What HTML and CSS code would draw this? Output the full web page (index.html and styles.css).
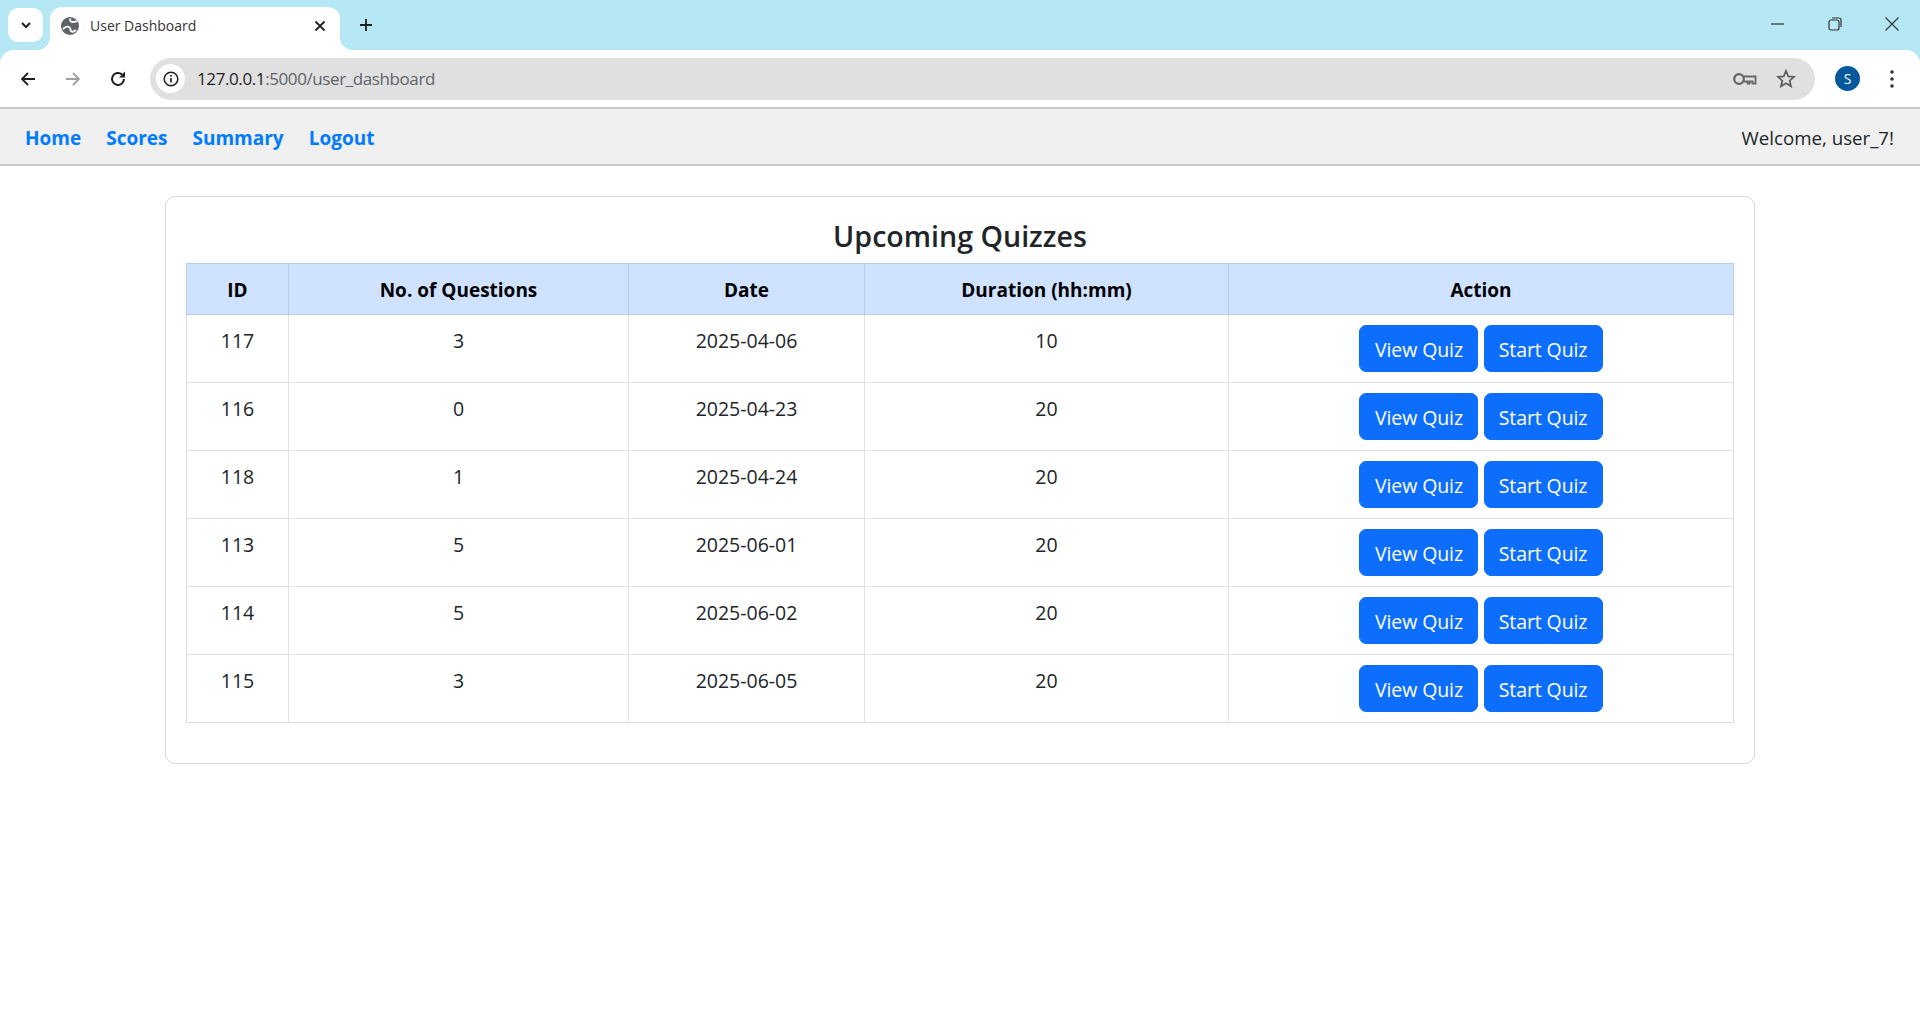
FILE: index.html
```html
<!DOCTYPE html>
<html lang="en">

<head>
    <title>User Dashboard</title>
    <link rel="stylesheet" href="styles.css">
</head>

<body>
    <!-- browser chrome -->
    <div class="tabstrip">
        <div class="tabsearch">
            <svg width="14" height="14" viewBox="0 0 14 14"><path d="M3 5l4 4 4-4" fill="none" stroke="#1f1f1f" stroke-width="2"/></svg>
        </div>
        <div class="tab">
            <svg class="favicon" width="18" height="18" viewBox="0 0 18 18">
                <circle cx="9" cy="9" r="9" fill="#5f6368"/>
                <path d="M9.500 1.500c-1 2 0 3.500 2 3.500s3-.5 4.500-.5M2 12c2-2 4-3 6-2s1 3 2 4 3 1 5-1" fill="none" stroke="#fff" stroke-width="1.800"/>
            </svg>
            <span class="tabtitle">User Dashboard</span>
            <svg class="tabclose" width="12" height="12" viewBox="0 0 12 12"><path d="M1.500 1.500l9 9M10.500 1.500l-9 9" stroke="#1f1f1f" stroke-width="1.800"/></svg>
        </div>
        <svg class="newtab" width="14" height="14" viewBox="0 0 14 14"><path d="M7 1v12M1 7h12" stroke="#1f1f1f" stroke-width="1.800"/></svg>
        <div class="winctrls">
            <svg width="14" height="14" viewBox="0 0 14 14"><path d="M0 7h13" stroke="#333" stroke-width="1.200"/></svg>
            <svg width="14" height="14" viewBox="0 0 14 14"><rect x="1" y="3" width="10" height="10" rx="2" fill="none" stroke="#333" stroke-width="1.200"/><path d="M4 1h7a2 2 0 0 1 2 2v7" fill="none" stroke="#333" stroke-width="1.200"/></svg>
            <svg width="14" height="14" viewBox="0 0 14 14"><path d="M.5.5l13 13M13.500.5l-13 13" stroke="#333" stroke-width="1.100"/></svg>
        </div>
    </div>
    <div class="toolbar">
        <svg class="navicon" width="18" height="18" viewBox="0 0 18 18"><path d="M16 9H3M9 3L3 9l6 6" fill="none" stroke="#1f1f1f" stroke-width="1.800"/></svg>
        <svg class="navicon" width="18" height="18" viewBox="0 0 18 18"><path d="M2 9h13M9 3l6 6-6 6" fill="none" stroke="#a0a0a0" stroke-width="1.800"/></svg>
        <svg class="navicon" width="18" height="18" viewBox="0 0 18 18"><path d="M15 9a6 6 0 1 1-2-4.500" fill="none" stroke="#1f1f1f" stroke-width="2"/><path d="M16 1.500v6h-6z" fill="#1f1f1f"/></svg>
        <div class="omnibox">
            <div class="siteinfo">
                <svg width="16" height="16" viewBox="0 0 16 16"><circle cx="8" cy="8" r="6.800" fill="none" stroke="#1f1f1f" stroke-width="1.500"/><path d="M8 7v4.500" stroke="#1f1f1f" stroke-width="1.700"/><circle cx="8" cy="4.800" r="1" fill="#1f1f1f"/></svg>
            </div>
            <span class="url"><span class="urlhost">127.0.0.1</span>:5000/user_dashboard</span>
            <svg class="omniicon" width="24" height="14" viewBox="0 0 24 14"><circle cx="6" cy="7" r="4.800" fill="none" stroke="#666" stroke-width="2.200"/><path d="M10.500 4.500h12v7h-3v-2h-3v2h-2v-2h-4" fill="none" stroke="#666" stroke-width="1.800"/></svg>
            <svg class="omniicon" width="20" height="19" viewBox="0 0 20 19"><path d="M10 2l2.300 5.400 5.700.5-4.300 3.800 1.300 5.600-5-3-5 3 1.300-5.600L2 7.900l5.700-.5z" fill="none" stroke="#5f5f5f" stroke-width="1.800"/></svg>
        </div>
        <div class="avatar">S</div>
        <svg class="menudots" width="4" height="18" viewBox="0 0 4 18"><circle cx="2" cy="2" r="1.800" fill="#333"/><circle cx="2" cy="9" r="1.800" fill="#333"/><circle cx="2" cy="16" r="1.800" fill="#333"/></svg>
    </div>

    <!-- page -->
    <nav class="navbar">
        <div class="navlinks">
            <a href="#">Home</a>
            <a href="#">Scores</a>
            <a href="#">Summary</a>
            <a href="#">Logout</a>
        </div>
        <span class="welcome">Welcome, user_7!</span>
    </nav>

    <div class="card">
        <h3>Upcoming Quizzes</h3>
        <table>
            <thead>
                <tr>
                    <th class="col-id">ID</th>
                    <th class="col-num">No. of Questions</th>
                    <th class="col-date">Date</th>
                    <th class="col-dur">Duration (hh:mm)</th>
                    <th>Action</th>
                </tr>
            </thead>
            <tbody>
                <tr><td>117</td><td>3</td><td>2025-04-06</td><td>10</td><td><a class="btn" href="#">View Quiz</a> <a class="btn" href="#">Start Quiz</a></td></tr>
                <tr><td>116</td><td>0</td><td>2025-04-23</td><td>20</td><td><a class="btn" href="#">View Quiz</a> <a class="btn" href="#">Start Quiz</a></td></tr>
                <tr><td>118</td><td>1</td><td>2025-04-24</td><td>20</td><td><a class="btn" href="#">View Quiz</a> <a class="btn" href="#">Start Quiz</a></td></tr>
                <tr><td>113</td><td>5</td><td>2025-06-01</td><td>20</td><td><a class="btn" href="#">View Quiz</a> <a class="btn" href="#">Start Quiz</a></td></tr>
                <tr><td>114</td><td>5</td><td>2025-06-02</td><td>20</td><td><a class="btn" href="#">View Quiz</a> <a class="btn" href="#">Start Quiz</a></td></tr>
                <tr><td>115</td><td>3</td><td>2025-06-05</td><td>20</td><td><a class="btn" href="#">View Quiz</a> <a class="btn" href="#">Start Quiz</a></td></tr>
            </tbody>
        </table>
    </div>
</body>

</html>
```

FILE: styles.css
```css
body {
  margin: 0;
  background-color: #fff;
  color: #212529;
  font-family: "Open Sans", "Noto Sans", sans-serif;
  font-size: 19.500px;
  line-height: 30px;
}

/* Browser tab strip */
.tabstrip {
  display: flex;
  align-items: flex-end;
  height: 50px;
  background-color: #b5e8f4;
}

.tabsearch {
  display: flex;
  align-items: center;
  justify-content: center;
  width: 35px;
  height: 34px;
  margin: 0 0 8px 8px;
  border-radius: 10px;
  background-color: #fff;
}

.tab {
  position: relative;
  display: flex;
  align-items: center;
  width: 290px;
  height: 43px;
  margin-left: 7px;
  padding: 0 14px 5px 11px;
  box-sizing: border-box;
  border-radius: 12px 12px 0 0;
  background-color: #fff;
}

/* Concave feet of the active tab */
.tab:before,
.tab:after {
  content: "";
  position: absolute;
  bottom: 0;
  width: 12px;
  height: 12px;
}

.tab:before {
  left: -12px;
  background: radial-gradient(circle at 0 0, transparent 11.500px, #fff 12px);
}

.tab:after {
  right: -12px;
  background: radial-gradient(circle at 100% 0, transparent 11.500px, #fff 12px);
}

.tabtitle {
  flex: 1;
  margin-left: 11px;
  font-size: 14px;
  color: #333;
}

.newtab {
  margin: 0 0 18px 19px;
}

.winctrls {
  display: flex;
  gap: 43px;
  margin: 0 21px 19px auto;
}

/* Browser toolbar */
.toolbar {
  display: flex;
  align-items: center;
  height: 59px;
  box-sizing: border-box;
  border-bottom: 2px solid #c8c8c8;
  border-radius: 14px 14px 0 0;
  background-color: #fff;
  box-shadow: 0 -14px 0 #b5e8f4;
  padding-left: 19px;
}

.navicon {
  margin-right: 27px;
}

.navicon:nth-child(3) {
  margin-right: 23px;
}

.omnibox {
  display: flex;
  align-items: center;
  flex: 1;
  height: 42px;
  border-radius: 21px;
  background-color: #e0e0e0;
  padding: 0 19px 0 6px;
}

.siteinfo {
  display: flex;
  align-items: center;
  justify-content: center;
  width: 29px;
  height: 29px;
  border-radius: 50%;
  background-color: #fff;
}

.url {
  flex: 1;
  margin-left: 12px;
  padding-top: 1px;
  font-size: 17px;
  letter-spacing: -0.4px;
  color: #5f6368;
}

.urlhost {
  color: #1f1f1f;
}

.omniicon {
  margin-left: 19px;
}

.avatar {
  width: 25px;
  height: 25px;
  margin-left: 20px;
  border-radius: 50%;
  background-color: #03579c;
  color: #fff;
  font-size: 14px;
  line-height: 25px;
  text-align: center;
}

.menudots {
  margin: 0 26px 0 30px;
}

/* Page nav */
.navbar {
  display: flex;
  align-items: center;
  justify-content: space-between;
  height: 57px;
  box-sizing: border-box;
  padding: 2px 26px 0 25px;
  border-bottom: 2px solid #ccc;
  background-color: #f0f0f0;
}

.navlinks {
  display: flex;
  gap: 25px;
}

.navlinks a {
  color: #007bff;
  font-size: 19px;
  font-weight: 700;
  text-decoration: none;
}

.welcome {
  font-size: 18.700px;
}

.card {
  width: 1590px;
  box-sizing: border-box;
  margin: 30px auto 0;
  padding: 21px 20px 40px;
  border: 1.500px solid #d8d8d8;
  border-radius: 10px;
}

h3 {
  margin: 0 0 9px;
  font-size: 28.600px;
  font-weight: 600;
  line-height: 36px;
  text-align: center;
}

table {
  width: 100%;
  table-layout: fixed;
  border-collapse: collapse;
}

th, td {
  padding: 11px 10px 10px;
  border: 1px solid #dee2e6;
  text-align: center;
  vertical-align: top;
}

th {
  padding: 11px 10px 9px;
  border-color: #bacee9;
  background-color: #cfe2ff;
  color: #000;
  font-size: 19px;
  font-weight: 700;
}

td:last-child {
  padding-top: 10px;
}

.col-id { width: 81px; }
.col-num { width: 319px; }
.col-date { width: 215px; }
.col-dur { width: 343px; }

.btn {
  display: inline-block;
  width: 119px;
  box-sizing: border-box;
  padding: 8.500px 0 6.500px;
  border: 1px solid #0d6efd;
  border-radius: 7px;
  background-color: #0d6efd;
  color: #fff;
  letter-spacing: -0.1px;
  text-decoration: none;
}
```
